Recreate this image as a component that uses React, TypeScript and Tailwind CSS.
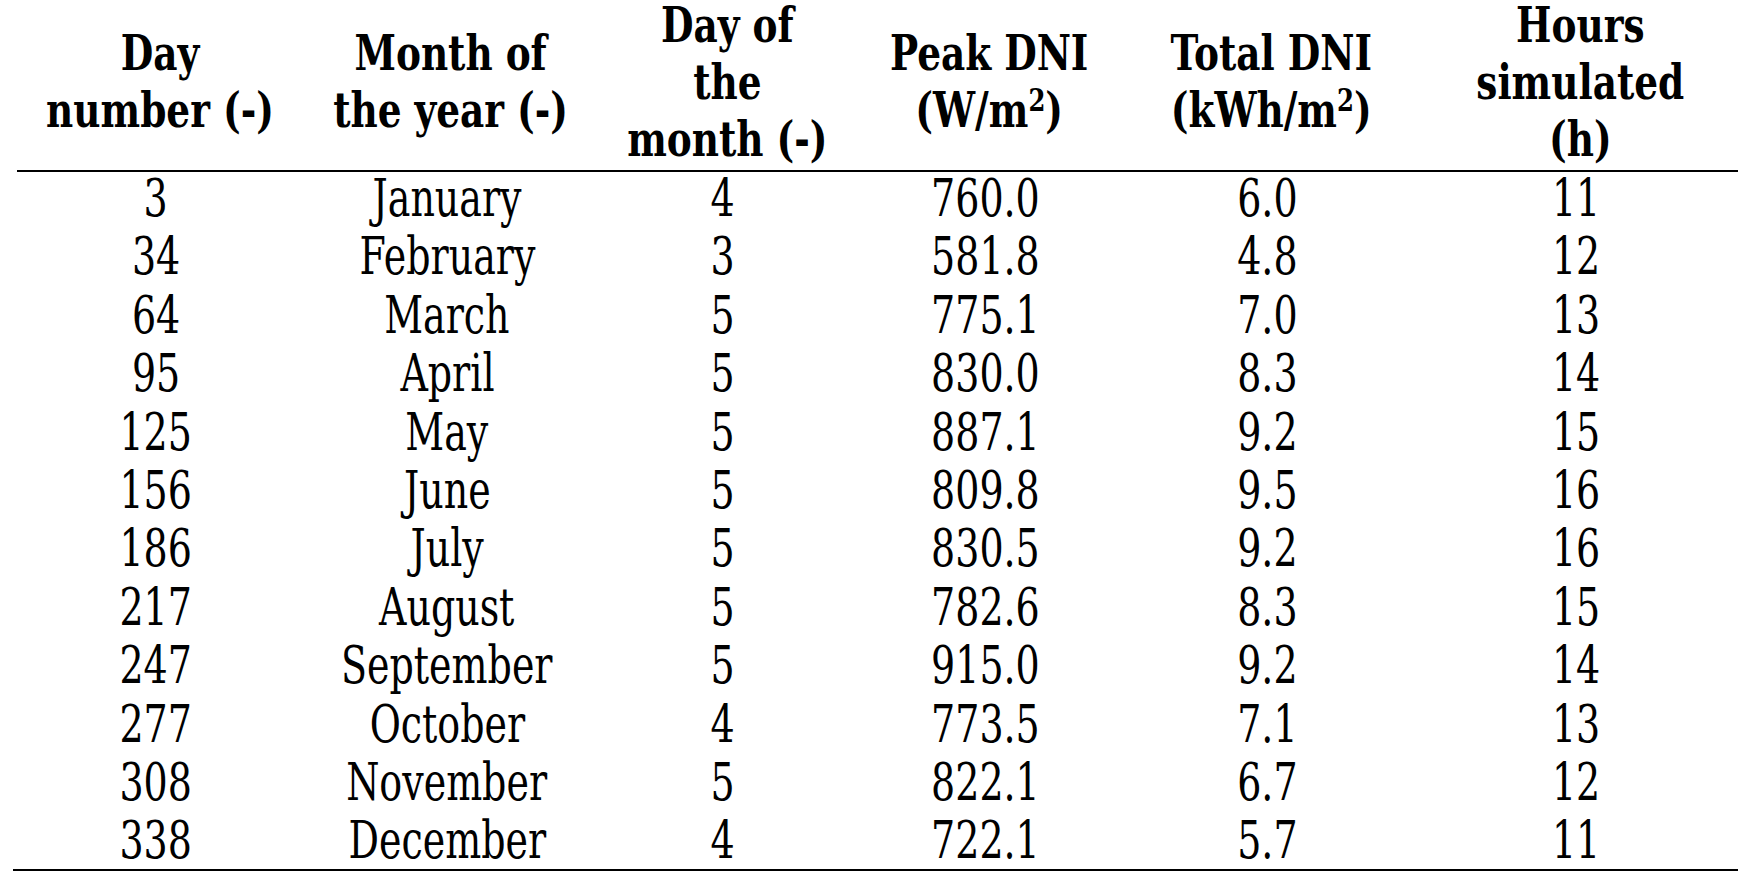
const rows: [string, string, string, string, string, string][] = [
  ['3', 'January', '4', '760.0', '6.0', '11'],
  ['34', 'February', '3', '581.8', '4.8', '12'],
  ['64', 'March', '5', '775.1', '7.0', '13'],
  ['95', 'April', '5', '830.0', '8.3', '14'],
  ['125', 'May', '5', '887.1', '9.2', '15'],
  ['156', 'June', '5', '809.8', '9.5', '16'],
  ['186', 'July', '5', '830.5', '9.2', '16'],
  ['217', 'August', '5', '782.6', '8.3', '15'],
  ['247', 'September', '5', '915.0', '9.2', '14'],
  ['277', 'October', '4', '773.5', '7.1', '13'],
  ['308', 'November', '5', '822.1', '6.7', '12'],
  ['338', 'December', '4', '722.1', '5.7', '11'],
];

const cols = 'grid grid-cols-[286px_296px_256px_268px_296px_1fr]';

const Head = ({ children }: { children: React.ReactNode }) => (
  <div className="flex items-center justify-center pb-[6px]">
    <span className="inline-block scale-x-[0.78] whitespace-nowrap text-center">{children}</span>
  </div>
);

export default function App() {
  return (
    <div className="min-h-screen bg-white text-black font-['DejaVu_Serif',serif] pl-[13px] overflow-hidden">
      {/* Header */}
      <div className={`${cols} grid-rows-[170px] text-[48px] font-bold leading-[57px] border-b-2 border-black ml-[4px] -mr-[4px]`}>
        <Head>Day<br />number (-)</Head>
        <Head>Month of<br />the year (-)</Head>
        <Head>Day of<br />the<br />month (-)</Head>
        <Head>Peak DNI<br />(W/m<sup className="text-[65%]">2</sup>)</Head>
        <Head>Total DNI<br />(kWh/m<sup className="text-[65%]">2</sup>)</Head>
        <Head>Hours<br />simulated<br />(h)</Head>
      </div>

      {/* Body */}
      <div className="border-b-2 border-black">
        {rows.map((r, i) => (
          <div key={i} className={`${cols} text-[52px] leading-[52px] pb-[6.4px] last:pb-[3px]`}>
            {r.map((c, j) => (
              <div key={j} className="flex justify-center">
                <span className="inline-block scale-x-[0.73] whitespace-nowrap">{c}</span>
              </div>
            ))}
          </div>
        ))}
      </div>
    </div>
  );
}
